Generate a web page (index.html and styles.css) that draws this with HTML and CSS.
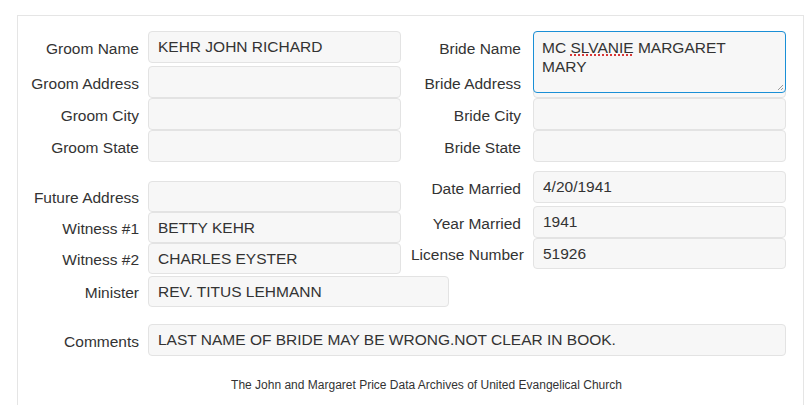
FILE: index.html
```html
<!DOCTYPE html>
<html lang="en">
<head>
  <meta charset="utf-8">
  <title>Marriage Record</title>
  <link rel="stylesheet" href="styles.css">
</head>
<body>

  <div class="page">
    <div class="panel">
      <div class="columns">

        <div class="col col-left">
          <div class="row row-1">
            <label>Groom Name</label>
            <input type="text" value="KEHR JOHN RICHARD" readonly>
          </div>
          <div class="row row-2">
            <label>Groom Address</label>
            <input type="text" value="" readonly>
          </div>
          <div class="row">
            <label>Groom City</label>
            <input type="text" value="" readonly>
          </div>
          <div class="row">
            <label>Groom State</label>
            <input type="text" value="" readonly>
          </div>

          <div class="row row-future short">
            <label>Future Address</label>
            <input type="text" value="" readonly>
          </div>
          <div class="row short">
            <label>Witness #1</label>
            <input type="text" value="BETTY KEHR" readonly>
          </div>
          <div class="row short">
            <label>Witness #2</label>
            <input type="text" value="CHARLES EYSTER" readonly>
          </div>
          <div class="row row-minister short">
            <label>Minister</label>
            <input type="text" class="wide" value="REV. TITUS LEHMANN" readonly>
          </div>
        </div>

        <div class="col col-right">
          <div class="row row-1 has-overlay">
            <label>Bride Name</label>
            <input type="text" value="" readonly>
            <div class="textarea" role="textbox" aria-multiline="true">MC <span class="misspelled">SLVANIE</span> MARGARET MARY<svg class="grip" width="7" height="7" viewBox="0 0 7 7"><path d="M6 1 L1 6 M6 4 L4 6" stroke="#9a9a9a" stroke-width="1"/></svg></div>
          </div>
          <div class="row row-2">
            <label>Bride Address</label>
            <input type="text" value="" readonly>
          </div>
          <div class="row">
            <label>Bride City</label>
            <input type="text" value="" readonly>
          </div>
          <div class="row">
            <label>Bride State</label>
            <input type="text" value="" readonly>
          </div>

          <div class="row row-date">
            <label>Date Married</label>
            <input type="text" value="4/20/1941" readonly>
          </div>
          <div class="row row-2">
            <label>Year Married</label>
            <input type="text" value="1941" readonly>
          </div>
          <div class="row short">
            <label>License Number</label>
            <input type="text" value="51926" readonly>
          </div>
        </div>

      </div>

      <div class="row row-comments">
        <label>Comments</label>
        <input type="text" class="full" value="LAST NAME OF BRIDE MAY BE WRONG.NOT CLEAR IN BOOK." readonly>
      </div>

      <p class="footer">The John and Margaret Price Data Archives of United Evangelical Church</p>
    </div>
  </div>

</body>
</html>
```

FILE: styles.css
```css
* {
  padding: 0;
  margin: 0;
  box-sizing: border-box;
}

body {
  background: #fff;
  font-family: "Liberation Sans", Arial, sans-serif;
  font-size: 15.5px;
  color: #333;
}

.page {
  padding: 15px 1px 0 17px;
}

.panel {
  border: 1px solid #e5e5e5;
  border-bottom: 0;
  min-height: 400px;
  padding-top: 15px;
}

.columns {
  display: flex;
  gap: 10px;
}

.col {
  display: flex;
  flex-direction: column;
  min-width: 0;
}

.col-left {
  flex: 0 0 383px;
}

.col-right {
  flex: 0 0 375px;
}

.row {
  display: flex;
  align-items: center;
}

.row label {
  text-align: right;
  white-space: nowrap;
  padding-top: 3px;
  flex-shrink: 0;
}

.col-left label,
.row-comments label {
  width: 121px;
  margin-right: 9px;
}

.col-right label {
  width: 110px;
  margin-right: 12px;
}

.row input {
  width: 253px;
  height: 32px;
  border: 1px solid #e3e3e3;
  border-radius: 4px;
  background: #f7f7f7;
  color: #333;
  font-family: inherit;
  font-size: 15.5px;
  padding: 0 9px;
  outline: 0;
  flex-shrink: 0;
}

.row.short input {
  height: 31px;
}

.row input.wide {
  width: 301px;
}

.row input.full {
  width: 638px;
}

.row-2 {
  margin-top: 3px;
}

.row-future {
  margin-top: 19px;
}

.row-minister {
  margin-top: 2px;
}

.row-date {
  margin-top: 9px;
}

.has-overlay {
  position: relative;
}

.textarea {
  position: absolute;
  left: 122px;
  top: 0;
  width: 253px;
  height: 62px;
  z-index: 2;
  border: 1px solid #1a8fd6;
  border-radius: 4px;
  background: #f7f7f7;
  color: #333;
  padding: 6px 20px 0 8px;
  line-height: 19px;
}

.misspelled {
  text-decoration: underline dotted #d00000;
  text-underline-offset: 2px;
}

.grip {
  position: absolute;
  right: 1px;
  bottom: 1px;
}

.row-comments {
  margin-top: 17px;
}

.footer {
  margin-top: 22px;
  padding-left: 32px;
  font-size: 12px;
  text-align: center;
}
```
